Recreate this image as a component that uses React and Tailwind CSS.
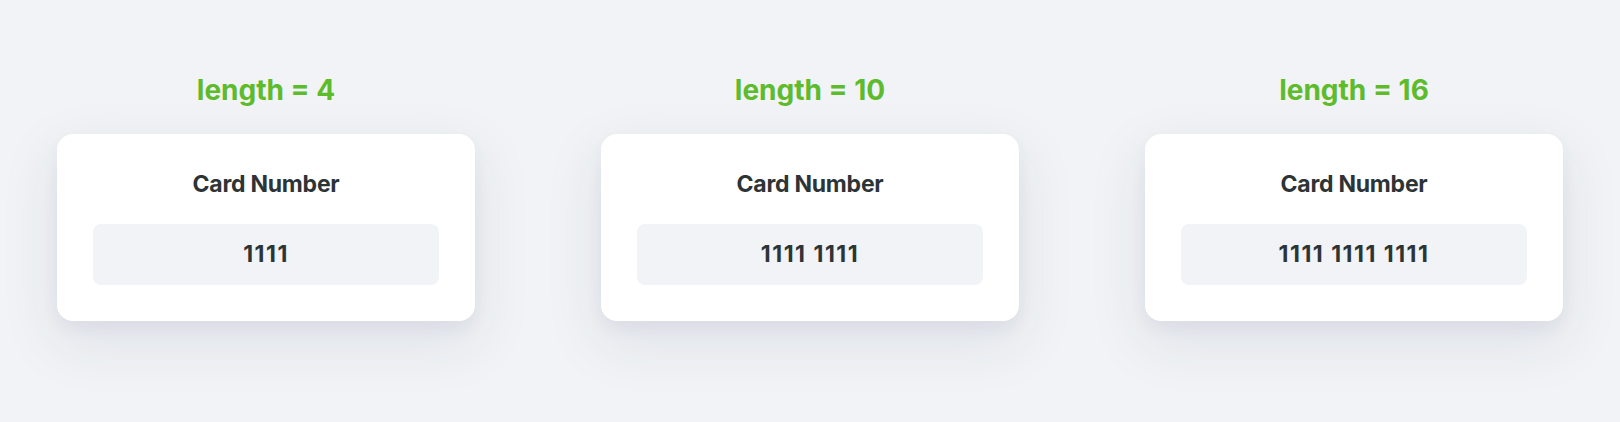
import React from "react";

const items = [
  { label: "length = 4", value: "1111" },
  { label: "length = 10", value: "1111 1111" },
  { label: "length = 16", value: "1111 1111 1111" },
];

export default function App() {
  return (
    <div
      className="w-[1620px] h-[422px] bg-[#f1f3f6] flex justify-center gap-[126px] pt-[73px]"
      style={{ fontFamily: "Inter, 'Liberation Sans', sans-serif" }}
    >
      {items.map((it) => (
        <div key={it.label} className="w-[418px] flex flex-col items-center">
          <div className="text-[28px] leading-[34px] font-bold text-[#5dbb2c]">
            {it.label}
          </div>
          <div className="mt-[27px] w-full bg-white rounded-2xl p-9 flex flex-col items-center shadow-[0_8px_16px_rgba(40,50,90,0.05),0_20px_56px_6px_rgba(40,50,90,0.08)]">
            <div className="text-[23px] leading-[28px] font-bold text-[#2d3436] tracking-[-0.01em]">
              Card Number
            </div>
            <div className="mt-[26px] w-full h-[61px] rounded-lg bg-[#f1f3f6] flex items-center justify-center text-[23px] font-bold text-[#2d3436] tracking-[1.5px]">
              {it.value}
            </div>
          </div>
        </div>
      ))}
    </div>
  );
}
